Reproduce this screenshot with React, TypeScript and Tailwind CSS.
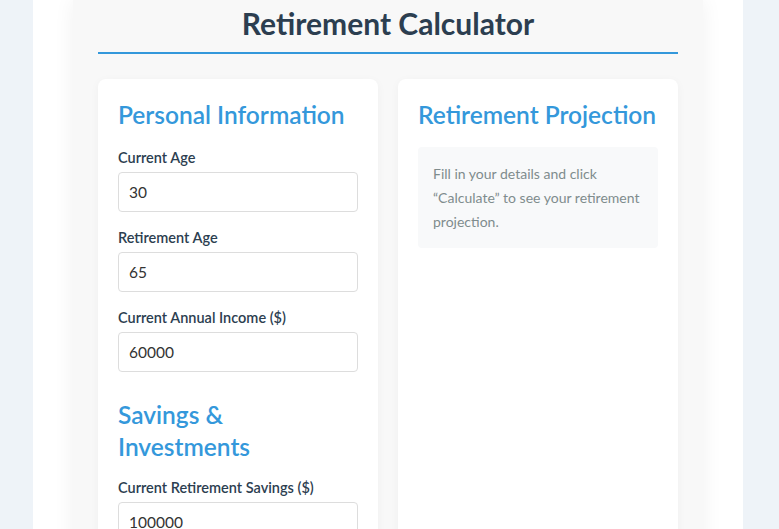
import React from "react";

const fields1 = [
  { label: "Current Age", value: "30" },
  { label: "Retirement Age", value: "65" },
  { label: "Current Annual Income ($)", value: "60000" },
];

const fields2 = [
  { label: "Current Retirement Savings ($)", value: "100000" },
  { label: "Monthly Contribution ($)", value: "500" },
  { label: "Expected Annual Return (%)", value: "7" },
];

function Field({ label, value }: { label: string; value: string }) {
  return (
    <div className="mb-[16px]">
      <label className="mb-[5px] block text-[14.5px] leading-[19px] font-semibold text-[#2c3e50]">
        {label}
      </label>
      <input
        type="number"
        defaultValue={value}
        className="block h-[40px] w-full rounded-[4px] border border-[#dddddd] bg-white px-[10px] text-[15.5px] text-[#333] outline-none"
      />
    </div>
  );
}

export default function App() {
  return (
    <div className="min-h-screen bg-[#eef3f8] font-['Lato','Open_Sans',sans-serif]">
      <div className="ml-[33px] w-[710px] bg-white px-10">
        <div className="bg-[#f8f8f8] px-[25px] pb-10 shadow-[0_0_20px_rgba(0,0,0,0.06)]">
          <h1 className="border-b-2 border-[#3498db] pt-[3px] pb-[9px] text-center text-[30px] leading-[40px] font-bold text-[#2c3e50]">
            Retirement Calculator
          </h1>
          <div className="mt-[25px] grid grid-cols-2 gap-5">
            <div className="rounded-lg bg-white p-5 shadow-[0_2px_10px_rgba(0,0,0,0.04)]">
              <h2 className="mb-[17px] text-[24.5px] leading-[32px] font-semibold text-[#3498db]">
                Personal Information
              </h2>
              {fields1.map((f) => (
                <Field key={f.label} {...f} />
              ))}
              <h2 className="mt-[27px] mb-[15px] text-[24.5px] leading-[32px] font-semibold text-[#3498db]">
                Savings &amp; Investments
              </h2>
              {fields2.map((f) => (
                <Field key={f.label} {...f} />
              ))}
              <button
                type="button"
                className="mt-2 h-[44px] w-full rounded-[4px] bg-[#3498db] text-[16px] font-semibold text-white"
              >
                Calculate
              </button>
            </div>
            <div className="rounded-lg bg-white p-5 shadow-[0_2px_10px_rgba(0,0,0,0.04)]">
              <h2 className="mb-[16px] text-[24.5px] leading-[32px] font-semibold text-[#3498db]">
                Retirement Projection
              </h2>
              <div className="rounded-[4px] bg-[#f8f9fa] p-[15px] text-[14px] leading-[1.7] text-[#7f8c8d]">
                Fill in your details and click “Calculate” to see your retirement projection.
              </div>
            </div>
          </div>
        </div>
      </div>
    </div>
  );
}
